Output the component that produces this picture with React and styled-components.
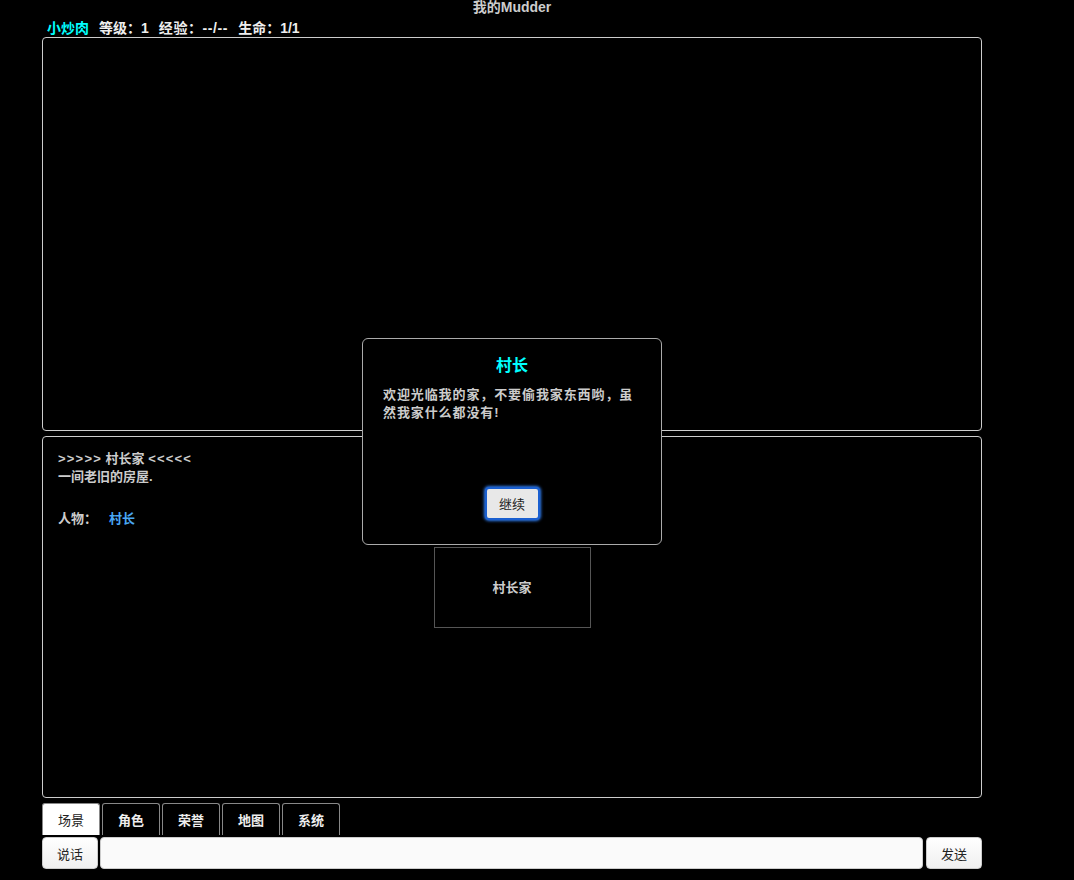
import { useState } from 'react';
import styled, { createGlobalStyle } from 'styled-components';

const GlobalStyle = createGlobalStyle`
  html, body {
    margin: 0;
    padding: 0;
    background: #000;
    color: #ddd;
    font-family: "Liberation Sans", "Noto Sans CJK SC", sans-serif;
    font-size: 13px;
  }
`;

const Page = styled.div`
  width: 940px;
  margin-left: 42px;
  height: 880px;
  display: flex;
  flex-direction: column;
`;

const Title = styled.div`
  height: 16px;
  line-height: 14px;
  text-align: center;
  color: #ccc;
  font-weight: bold;
  font-size: 14px;
`;

const Status = styled.div`
  height: 21px;
  line-height: 24px;
  padding-left: 5px;
  font-weight: bold;
  font-size: 14px;
  color: #eee;
  display: flex;
  gap: 10px;
`;

const Name = styled.span`
  color: #0ff;
`;

const Stat = styled.span`
  letter-spacing: ${(p) => p.ls || 0}px;
`;

const Panel = styled.div`
  border: 1px solid #ccc;
  border-radius: 4px;
  height: ${(p) => p.h}px;
  box-sizing: border-box;
  margin-bottom: 5px;
  position: relative;
`;

const Scene = styled.div`
  padding: 13px 15px;
  color: #ccc;
  font-weight: bold;
  line-height: 18px;
`;

const Arrows = styled.span`
  letter-spacing: 1.2px;
`;

const Gap = styled.div`
  height: 24px;
`;

const Person = styled.span`
  color: #4aa8f5;
  margin-left: 12px;
`;

const MapRoom = styled.div`
  width: 157px;
  height: 81px;
  box-sizing: border-box;
  border: 1px solid #555;
  margin: 6px auto 0;
  padding-bottom: 3px;
  display: flex;
  align-items: center;
  justify-content: center;
  color: #ccc;
  font-weight: bold;
`;

const Tabs = styled.div`
  display: flex;
  gap: 2px;
  height: 32px;
`;

const Tab = styled.button`
  width: 58px;
  height: 32px;
  box-sizing: border-box;
  border: 1px solid #888;
  border-bottom: none;
  border-radius: 3px 3px 0 0;
  background: ${(p) => (p.active ? '#fff' : '#000')};
  color: ${(p) => (p.active ? '#222' : '#eee')};
  font-family: inherit;
  font-size: 13px;
  font-weight: ${(p) => (p.active ? 'normal' : 'bold')};
  padding: 0;
  cursor: pointer;
`;

const InputRow = styled.div`
  display: flex;
  gap: 2px;
  margin-top: 2px;
  height: 32px;
`;

const Btn = styled.button`
  width: 56px;
  height: 32px;
  box-sizing: border-box;
  border: 1px solid #ccc;
  border-radius: 4px;
  background: linear-gradient(#fff, #f0f0f0);
  color: #222;
  font-family: inherit;
  font-size: 13px;
  padding: 0;
  margin-left: ${(p) => p.ml || 0}px;
`;

const Input = styled.input`
  flex: 1;
  height: 32px;
  box-sizing: border-box;
  border: 1px solid #ccc;
  border-radius: 4px;
  background: #fafafa;
`;

const Dialog = styled.div`
  position: absolute;
  left: 362px;
  top: 338px;
  width: 300px;
  height: 207px;
  box-sizing: border-box;
  background: #000;
  border: 1px solid #aaa;
  border-radius: 6px;
  padding: 14px 20px;
  display: flex;
  flex-direction: column;
`;

const DialogTitle = styled.div`
  text-align: center;
  color: #0ff;
  font-weight: bold;
  font-size: 16px;
  line-height: 26px;
`;

const DialogText = styled.div`
  color: #ccc;
  font-weight: bold;
  line-height: 18px;
  margin-top: 7px;
  letter-spacing: 0.9px;
  flex: 1;
`;

const Continue = styled.button`
  align-self: center;
  width: 55px;
  height: 33px;
  margin-bottom: 10px;
  box-sizing: border-box;
  background: #e8e8e8;
  border: 2px solid #1a5fd0;
  box-shadow: 0 0 3px 1px #2f7cf0;
  border-radius: 4px;
  color: #222;
  font-family: inherit;
  font-size: 13px;
  padding: 0;
`;

const tabs = ['场景', '角色', '荣誉', '地图', '系统'];

export default function App() {
  const [active, setActive] = useState(0);
  return (
    <>
      <GlobalStyle />
      <Page>
        <Title>我的Mudder</Title>
        <Status>
          <Name>小炒肉</Name>
          <Stat>等级：1</Stat>
          <Stat ls={0.6}>经验：--/--</Stat>
          <Stat>生命：1/1</Stat>
        </Status>
        <Panel h={394} />
        <Panel h={362}>
          <Scene>
            <div>
              <Arrows>&gt;&gt;&gt;&gt;&gt;</Arrows> 村长家 <Arrows>&lt;&lt;&lt;&lt;&lt;</Arrows>
            </div>
            <div>一间老旧的房屋.</div>
            <Gap />
            <div>
              人物：<Person>村长</Person>
            </div>
          </Scene>
          <MapRoom>村长家</MapRoom>
        </Panel>
        <Tabs>
          {tabs.map((t, i) => (
            <Tab key={t} active={i === active} onClick={() => setActive(i)}>
              {t}
            </Tab>
          ))}
        </Tabs>
        <InputRow>
          <Btn>说话</Btn>
          <Input />
          <Btn ml={1}>发送</Btn>
        </InputRow>
      </Page>
      <Dialog>
        <DialogTitle>村长</DialogTitle>
        <DialogText>欢迎光临我的家，不要偷我家东西哟，虽然我家什么都没有!</DialogText>
        <Continue>继续</Continue>
      </Dialog>
    </>
  );
}
